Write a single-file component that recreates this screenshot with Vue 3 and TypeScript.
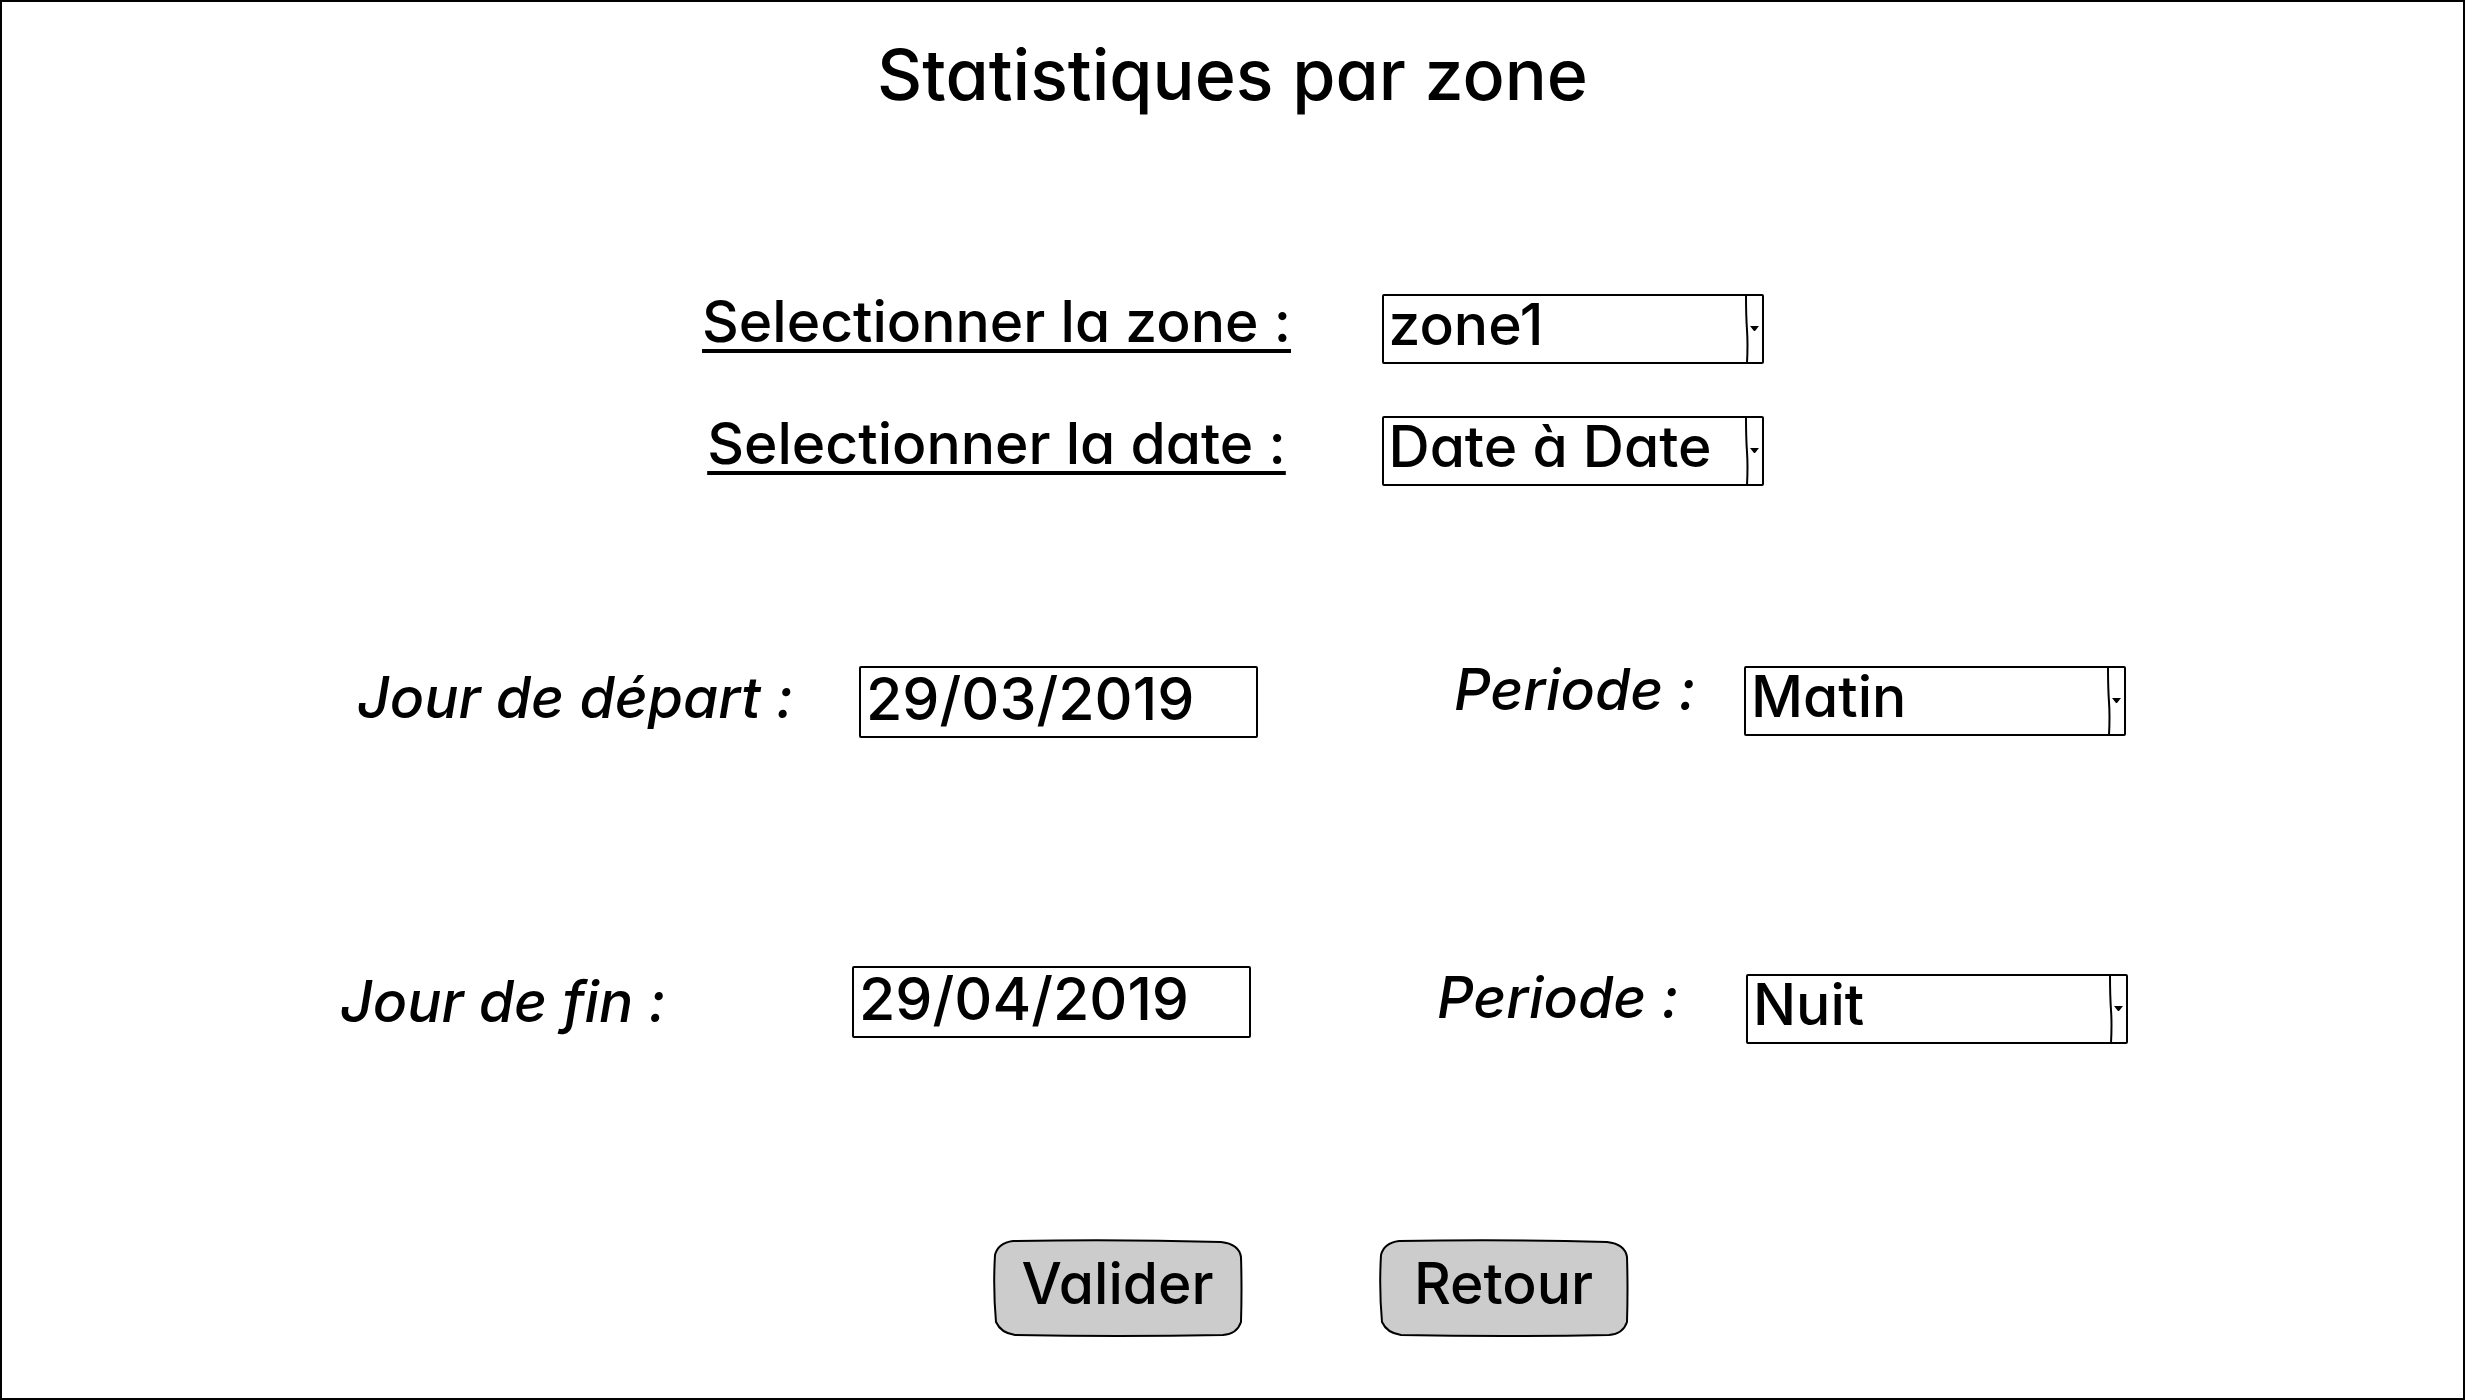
<script setup lang="ts">
import { ref } from 'vue'

const zone = ref('zone1')
const dateMode = ref('Date à Date')
const startDay = ref('29/03/2019')
const endDay = ref('29/04/2019')
const startPeriod = ref('Matin')
const endPeriod = ref('Nuit')

const zones: string[] = ['zone1', 'zone2', 'zone3']
const dateModes: string[] = ['Date à Date', 'Jour']
const periods: string[] = ['Matin', 'Nuit']
</script>

<template>
  <main class="page">
    <h1 class="title">Statistiques par zone</h1>

    <form class="form" @submit.prevent>
      <div class="filters">
        <label class="filter-label" for="zone">Selectionner la zone :</label>
        <div class="picker">
          <select id="zone" v-model="zone" class="control">
            <option v-for="z in zones" :key="z">{{ z }}</option>
          </select>
          <svg class="handle" viewBox="0 0 20 70" aria-hidden="true">
            <path class="rule" d="M2 1 Q2 22 3 36 T3 69" />
            <path d="M6 32h9l-4 5h-1z" />
          </svg>
        </div>

        <label class="filter-label" for="date-mode">Selectionner la date :</label>
        <div class="picker">
          <select id="date-mode" v-model="dateMode" class="control">
            <option v-for="m in dateModes" :key="m">{{ m }}</option>
          </select>
          <svg class="handle" viewBox="0 0 20 70" aria-hidden="true">
            <path class="rule" d="M2 1 Q2 22 3 36 T3 69" />
            <path d="M6 32h9l-4 5h-1z" />
          </svg>
        </div>
      </div>

      <div class="range range-start">
        <label class="range-label first low" for="start-day">Jour de départ :</label>
        <input id="start-day" v-model="startDay" class="control day" type="text" />
        <label class="range-label" for="start-period">Periode :</label>
        <div class="picker">
          <select id="start-period" v-model="startPeriod" class="control">
            <option v-for="p in periods" :key="p">{{ p }}</option>
          </select>
          <svg class="handle" viewBox="0 0 20 70" aria-hidden="true">
            <path class="rule" d="M2 1 Q2 22 3 36 T3 69" />
            <path d="M6 32h9l-4 5h-1z" />
          </svg>
        </div>
      </div>

      <div class="range range-end">
        <label class="range-label first lower" for="end-day">Jour de fin :</label>
        <input id="end-day" v-model="endDay" class="control day" type="text" />
        <label class="range-label low" for="end-period">Periode :</label>
        <div class="picker low">
          <select id="end-period" v-model="endPeriod" class="control">
            <option v-for="p in periods" :key="p">{{ p }}</option>
          </select>
          <svg class="handle" viewBox="0 0 20 70" aria-hidden="true">
            <path class="rule" d="M2 1 Q2 22 3 36 T3 69" />
            <path d="M6 32h9l-4 5h-1z" />
          </svg>
        </div>
      </div>

      <div class="actions">
        <button class="action" type="submit">
          <svg class="shape" viewBox="0 0 250 98" aria-hidden="true">
            <path d="M20 2 Q125 0 228 3 Q246 5 248 18 Q249 50 248 83 Q244 95 230 96 Q125 98 22 96 Q8 94 3 83 Q0 50 2 16 Q5 4 20 2z" />
          </svg>
          <span class="caption">Valider</span>
        </button>
        <button class="action" type="button">
          <svg class="shape" viewBox="0 0 250 98" aria-hidden="true">
            <path d="M20 2 Q125 0 228 3 Q246 5 248 18 Q249 50 248 83 Q244 95 230 96 Q125 98 22 96 Q8 94 3 83 Q0 50 2 16 Q5 4 20 2z" />
          </svg>
          <span class="caption">Retour</span>
        </button>
      </div>
    </form>
  </main>
</template>

<style>
body {
  margin: 0;
  background: #fff;
}
</style>

<style scoped>
.page {
  box-sizing: border-box;
  min-height: 100vh;
  padding-top: 33px;
  border: 2px solid #000;
  background: #fff;
  color: #000;
  font: 500 57px/56px Inter, "Open Sans", sans-serif;
  font-feature-settings: "cv11";
}

.title {
  margin: 0;
  font-size: 70px;
  font-weight: 500;
  line-height: 80px;
  text-align: center;
}

.form {
  padding-top: 179px;
}

.filters {
  display: grid;
  grid-template-columns: 590px 382px;
  justify-content: center;
  gap: 52px 90px;
}

.filter-label {
  justify-self: center;
  text-decoration: underline;
  text-decoration-thickness: 4px;
  text-underline-offset: 7px;
  text-decoration-skip-ink: none;
  white-space: nowrap;
}

.range {
  display: grid;
  align-items: start;
}

.range-start {
  grid-template-columns: 355fr 502fr 595fr 290fr 382fr 337fr;
  margin-top: 180px;
}

.range-end {
  grid-template-columns: 338fr 512fr 585fr 309fr 382fr 335fr;
  margin-top: 228px;
}

.range-label {
  font-style: italic;
  line-height: 48px;
  white-space: nowrap;
}

.first {
  grid-column: 2;
}

.low {
  margin-top: 8px;
}

.lower {
  margin-top: 12px;
}

.control {
  display: block;
  box-sizing: border-box;
  width: 100%;
  height: 70px;
  margin: 0;
  padding: 0 24px 8px 5px;
  border: 2px solid #000;
  border-radius: 2px;
  outline: 0;
  appearance: none;
  background: #fff;
  color: inherit;
  font: inherit;
  font-feature-settings: inherit;
  line-height: 58px;
}

.day {
  max-width: 399px;
  height: 72px;
  font-size: 59px;
}

.picker {
  position: relative;
}

.handle {
  position: absolute;
  top: 0;
  right: 0;
  width: 20px;
  height: 70px;
  pointer-events: none;
}

.rule {
  fill: none;
  stroke: #000;
  stroke-width: 2px;
}

.actions {
  display: flex;
  justify-content: center;
  gap: 136px;
  margin-top: 195px;
  padding-left: 156px;
}

.action {
  position: relative;
  width: 250px;
  height: 98px;
  padding: 0 0 8px;
  border: 0;
  background: none;
  color: inherit;
  font: inherit;
  font-feature-settings: inherit;
}

.shape {
  position: absolute;
  inset: 0;
  width: 100%;
  height: 100%;
  fill: #ccc;
  stroke: #000;
  stroke-width: 2px;
}

.caption {
  position: relative;
}
</style>
